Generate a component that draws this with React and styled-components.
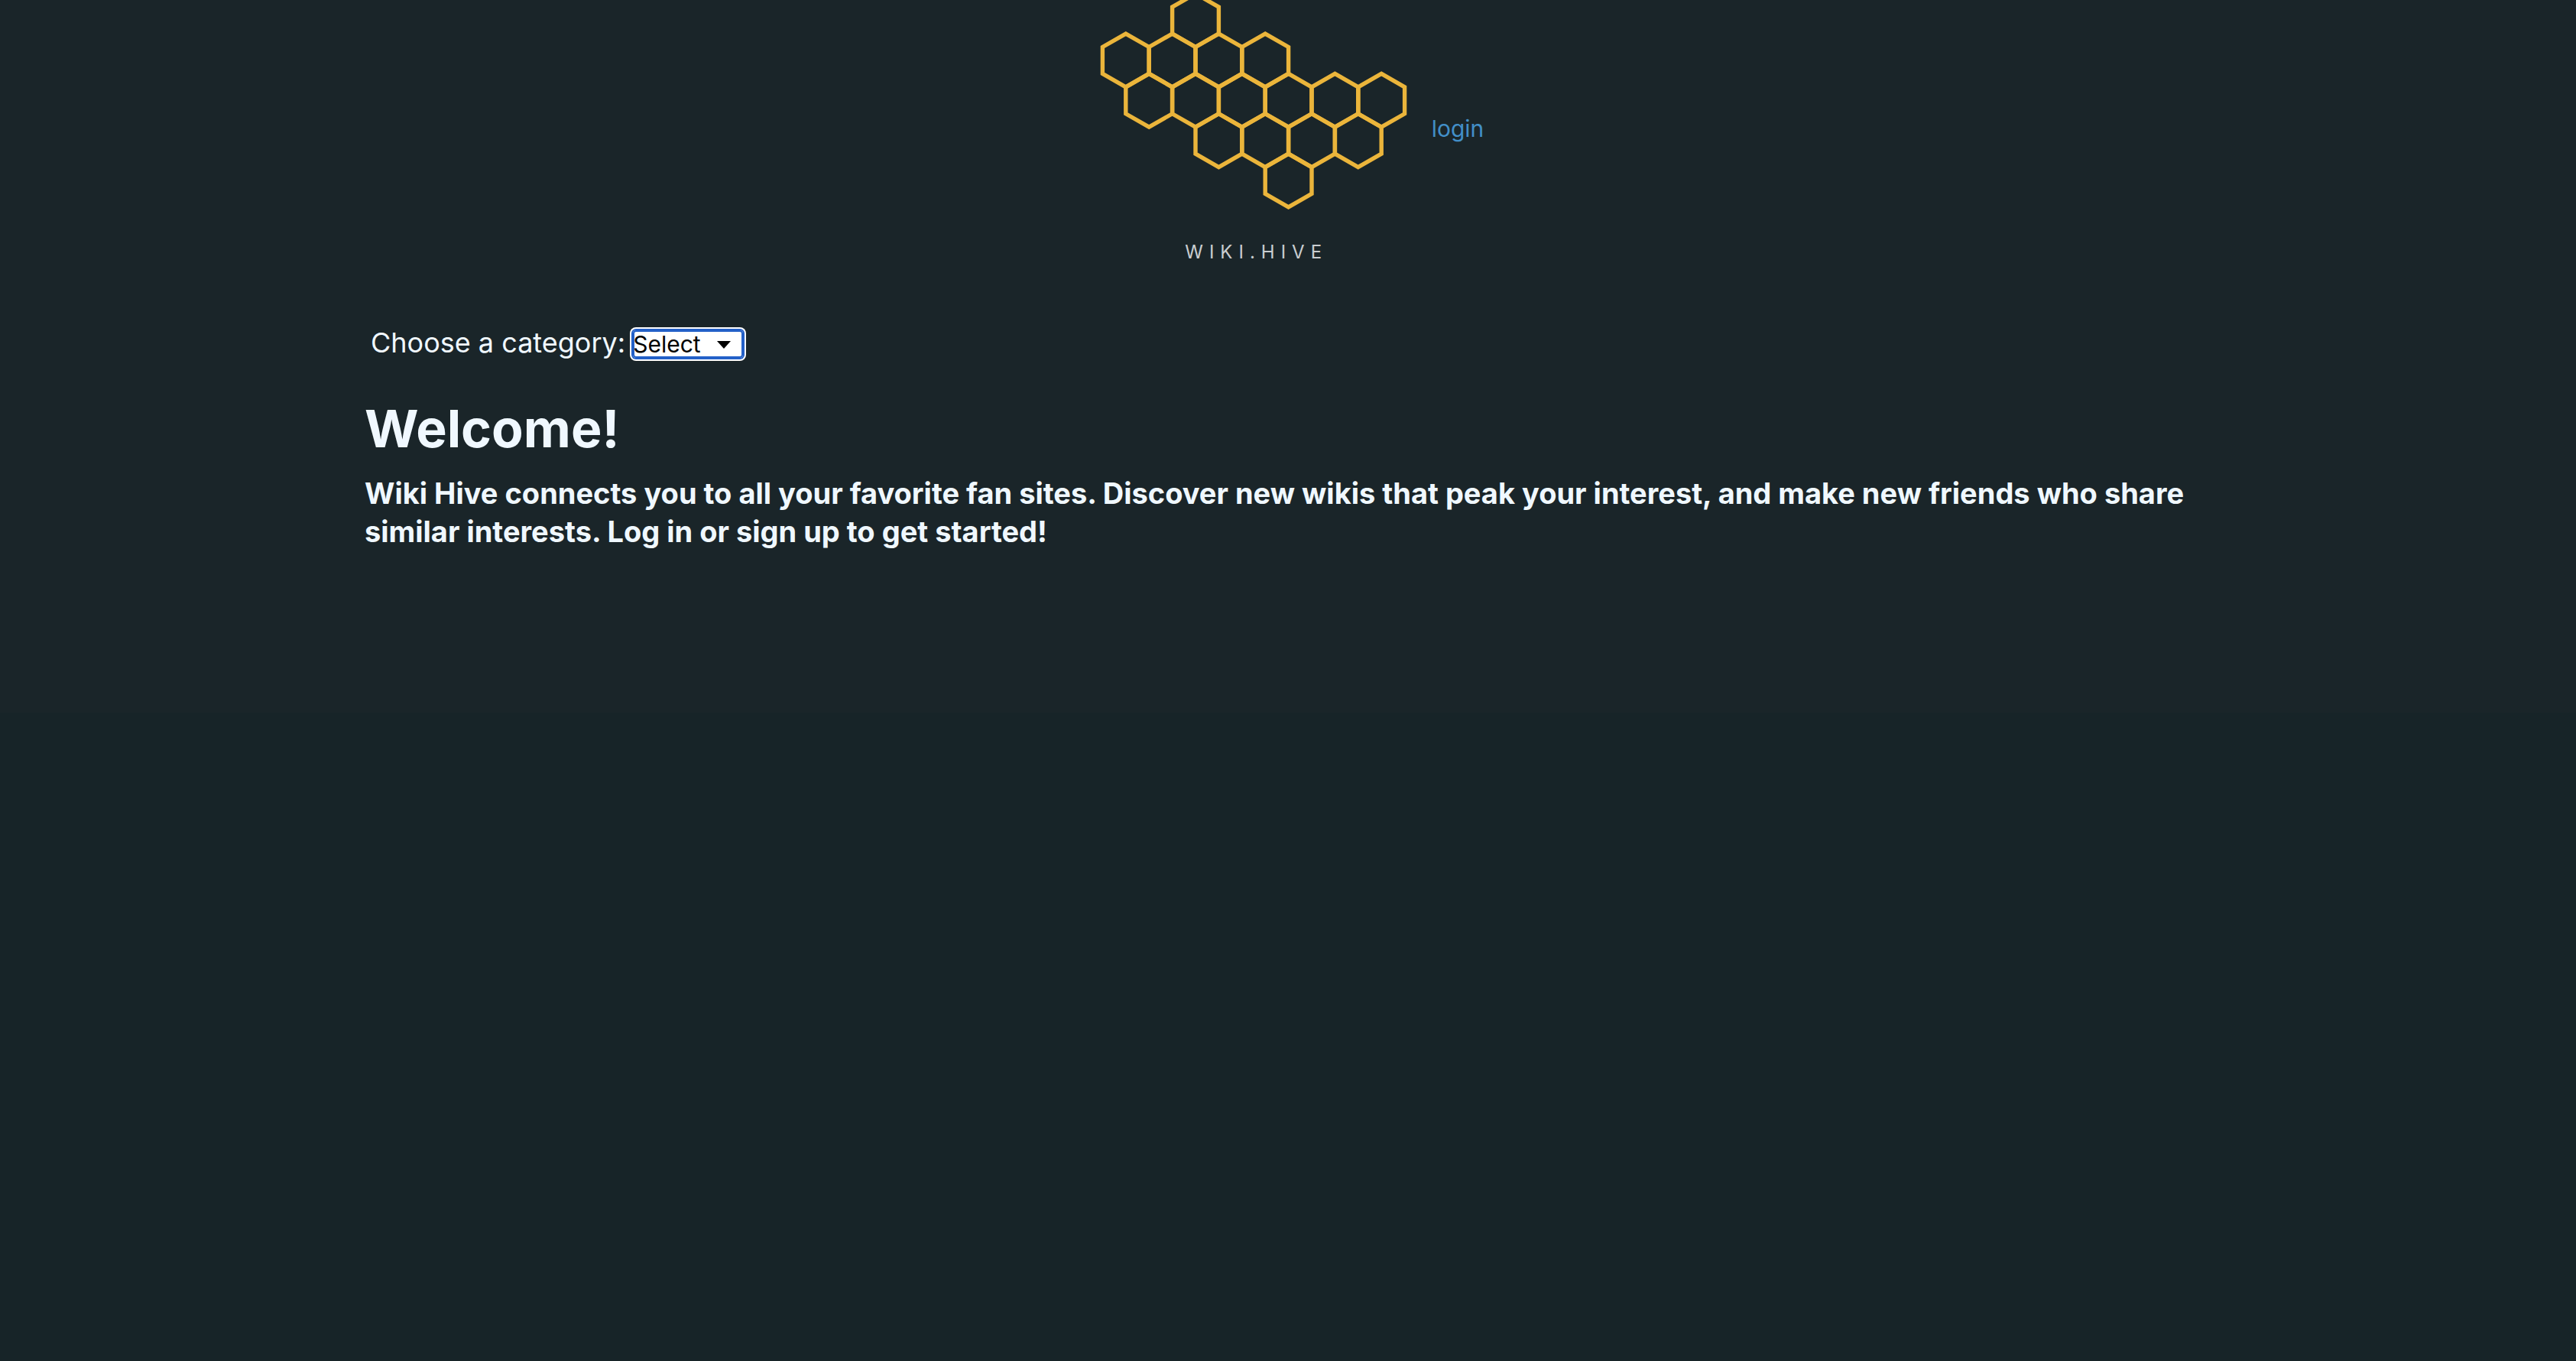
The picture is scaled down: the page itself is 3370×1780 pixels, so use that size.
import React from "react";
import styled, { createGlobalStyle } from "styled-components";

const GlobalStyle = createGlobalStyle`
  *, *::before, *::after { box-sizing: border-box; }
  html { background: #172428; }
  body {
    margin: 0;
    background: linear-gradient(#1a2529 0 932px, #172428 932px);
    color: #f0f8ff;
    font-family: Inter, "Liberation Sans", sans-serif;
    font-size: 30px;
    min-height: 100vh;
  }
`;

const Header = styled.header`
  display: flex;
  justify-content: center;
  gap: 22px;
`;

const Brand = styled.div`
  display: flex;
  flex-direction: column;
  align-items: center;
  width: 422px;
`;

const Comb = styled.svg`
  display: block;
  width: 100%;
  height: auto;
  fill: none;
  stroke: #ebb53b;
  stroke-width: 5.4;
`;

const BrandName = styled.span`
  margin-top: 30px;
  padding-left: 8px;
  color: #c9cdd0;
  font-size: 24px;
  line-height: 32px;
  letter-spacing: 8px;
`;

const LoginLink = styled.a`
  align-self: flex-start;
  margin-top: 148px;
  color: #428fc8;
  font-size: 30px;
  line-height: 40px;
  text-decoration: none;
`;

const Main = styled.main`
  max-width: 2416px;
  margin: 0 auto;
`;

const Field = styled.div`
  display: flex;
  align-items: baseline;
  gap: 10px;
  margin-top: 76px;
  padding-left: 8px;
`;

const Label = styled.label`
  font-size: 36px;
  line-height: 52px;
`;

const SelectBox = styled.span`
  position: relative;
  display: flex;
`;

const Select = styled.select`
  appearance: none;
  width: 144px;
  height: 36px;
  padding: 0 36px 0 0;
  border: 0;
  border-radius: 4px;
  outline: none;
  background: #fff;
  box-shadow: inset 0 0 0 2px #2360c8, 0 0 0 2px #2360c8, 0 0 0 4px #fff;
  color: #000;
  font: inherit;
  line-height: 36px;
`;

const Caret = styled.svg`
  position: absolute;
  right: 16px;
  top: 14px;
  width: 18px;
  height: 10px;
  pointer-events: none;
`;

const Title = styled.h1`
  margin: 46px 0 0;
  font-size: 68px;
  font-weight: 700;
  line-height: 80px;
`;

const Intro = styled.h2`
  margin: 20px 0 0;
  font-size: 38px;
  font-weight: 700;
  line-height: 50px;
`;

const STEP_X = 60.8;
const STEP_Y = 52.35;
const ROWS = [
  { row: 0, start: 1.5, count: 1 },
  { row: 1, start: 0, count: 4 },
  { row: 2, start: 0.5, count: 6 },
  { row: 3, start: 2, count: 4 },
  { row: 4, start: 3.5, count: 1 },
];

const CELLS = ROWS.flatMap(({ row, start, count }) =>
  Array.from({ length: count }, (_, i) => ({
    x: 43.8 + (start + i) * STEP_X,
    y: 26.6 + row * STEP_Y,
  }))
);

const hexPoints = ({ x, y }) =>
  [
    [0, -34.9],
    [30.4, -17.45],
    [30.4, 17.45],
    [0, 34.9],
    [-30.4, 17.45],
    [-30.4, -17.45],
  ]
    .map(([dx, dy]) => `${x + dx},${y + dy}`)
    .join(" ");

export default function App() {
  return (
    <>
      <GlobalStyle />
      <Header>
        <Brand>
          <Comb viewBox="0 0 422 284" aria-hidden="true">
            {CELLS.map((cell) => (
              <polygon key={`${cell.x}-${cell.y}`} points={hexPoints(cell)} />
            ))}
          </Comb>
          <BrandName>WIKI.HIVE</BrandName>
        </Brand>
        <LoginLink href="#login">login</LoginLink>
      </Header>
      <Main>
        <Field>
          <Label htmlFor="category">Choose a category:</Label>
          <SelectBox>
            <Select id="category" defaultValue="">
              <option value="">Select</option>
            </Select>
            <Caret viewBox="0 0 18 10" aria-hidden="true">
              <path d="M0 0H18L9 10Z" />
            </Caret>
          </SelectBox>
        </Field>
        <Title>Welcome!</Title>
        <Intro>
          Wiki Hive connects you to all your favorite fan sites. Discover new
          wikis that peak your interest, and make new friends who share similar
          interests. Log in or sign up to get started!
        </Intro>
      </Main>
    </>
  );
}
